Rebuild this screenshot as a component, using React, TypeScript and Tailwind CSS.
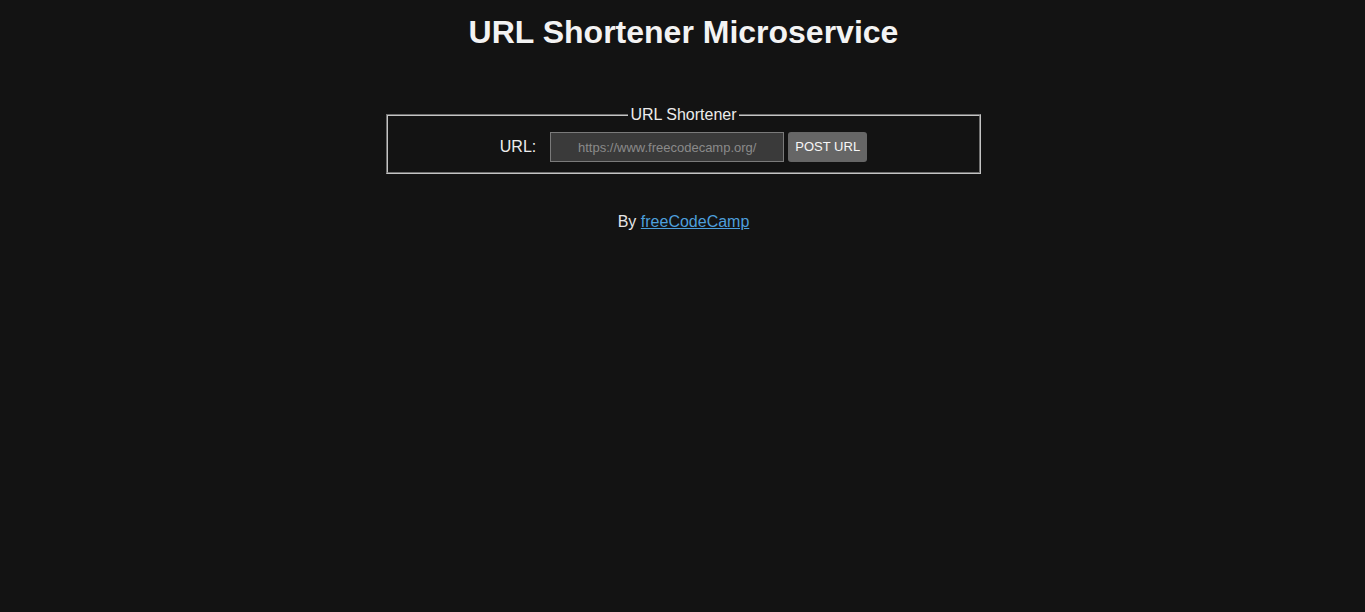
import React from 'react';

const App: React.FC = () => {
  return (
    <div className="min-h-[612px] pl-[2px] bg-[#131313] text-[#e8e8e8] font-['Liberation_Sans',Arial,sans-serif] text-center">
      <h1 className="pt-[14px] text-[32px] leading-[37px] font-bold text-[#f3f3f3]">URL Shortener Microservice</h1>
      <fieldset className="w-[595px] mx-auto mt-[55px] border-2 border-[#c4c4c4] [border-style:groove] px-3 pb-[10px] pt-[8px]">
        <legend className="mx-auto px-[2px] text-base leading-[18px] text-[#ececec]">URL Shortener</legend>
        <form className="flex items-center justify-center" onSubmit={(e) => e.preventDefault()}>
          <label htmlFor="url_input" className="text-base text-[#ececec] mr-[14px]">URL:</label>
          <input
            id="url_input"
            type="text"
            placeholder="https://www.freecodecamp.org/"
            className="w-[234px] h-[30px] bg-[#3a3a3a] border border-[#7a7a7a] text-[13px] text-center text-[#ddd] placeholder:text-[#8a8a8a] outline-none"
          />
          <button type="submit" className="ml-[4px] h-[30px] w-[79px] rounded-[3px] bg-[#666666] text-[13px] text-[#f7f7f7]">
            POST URL
          </button>
        </form>
      </fieldset>
      <p className="mt-[36px] text-base text-[#e6e6e6]">
        By{' '}
        <a href="#" className="text-[#4d9fdc] underline">freeCodeCamp</a>
      </p>
    </div>
  );
};

export default App;
